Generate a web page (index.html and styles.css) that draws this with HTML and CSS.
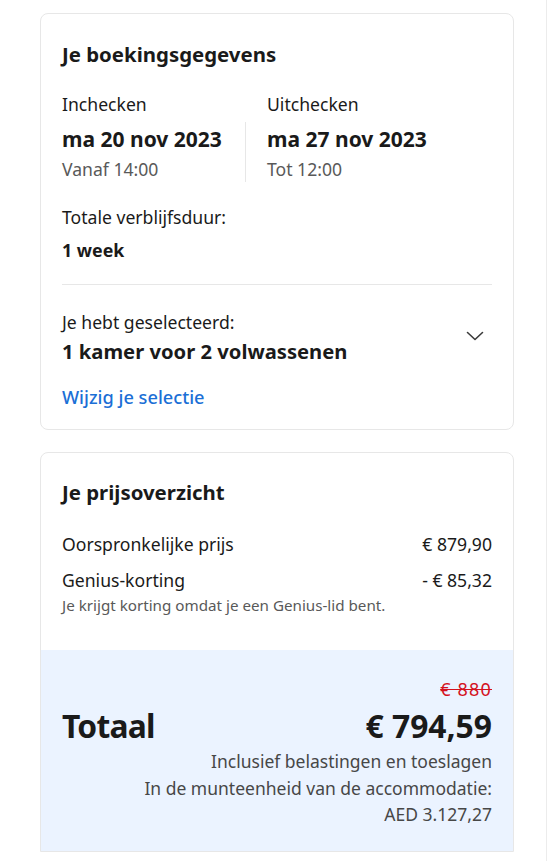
FILE: index.html
```html
<!DOCTYPE html>
<html lang="nl">
<head>
<meta charset="utf-8">
<link rel="stylesheet" href="styles.css">
</head>
<body>
<div class="page">
  <main class="col">
    <section class="card">
      <h2 class="title">Je boekingsgegevens</h2>
      <div class="dates">
        <div class="date">
          <div class="label">Inchecken</div>
          <div class="big">ma 20 nov 2023</div>
          <div class="sub">Vanaf 14:00</div>
        </div>
        <div class="vsep"></div>
        <div class="date">
          <div class="label">Uitchecken</div>
          <div class="big">ma 27 nov 2023</div>
          <div class="sub">Tot 12:00</div>
        </div>
      </div>
      <div class="stay">
        <div class="label">Totale verblijfsduur:</div>
        <div class="strong">1 week</div>
      </div>
      <hr class="hsep">
      <div class="selected">
        <div>
          <div class="label">Je hebt geselecteerd:</div>
          <div class="sel-value">1 kamer voor 2 volwassenen</div>
        </div>
        <svg class="chev" width="18" height="10" viewBox="0 0 18 10"><path d="M1.5 1.5 L9 8.5 L16.5 1.5" fill="none" stroke="#3b3b3b" stroke-width="1.6" stroke-linecap="round" stroke-linejoin="round"/></svg>
      </div>
      <a class="link">Wijzig je selectie</a>
    </section>

    <section class="card card-price">
      <div class="price-top">
        <h2 class="title">Je prijsoverzicht</h2>
        <div class="row"><span>Oorspronkelijke prijs</span><span>€ 879,90</span></div>
        <div class="row row2"><span>Genius-korting</span><span>- € 85,32</span></div>
        <div class="note">Je krijgt korting omdat je een Genius-lid bent.</div>
      </div>
      <div class="total">
        <div class="old">€ 880</div>
        <div class="total-row"><span class="total-label">Totaal</span><span>€ 794,59</span></div>
        <div class="incl">Inclusief belastingen en toeslagen</div>
        <div class="incl">In de munteenheid van de accommodatie:</div>
        <div class="incl">AED 3.127,27</div>
      </div>
    </section>
  </main>
  <aside class="side"></aside>
</div>
</body>
</html>
```
FILE: styles.css
```css
* { box-sizing: border-box; }
html, body { margin: 0; padding: 0; background: #fff; }
body {
  font-family: "Noto Sans", "Open Sans", Arial, sans-serif;
  color: #1a1a1a;
  font-size: 17.6px;
  overflow: hidden;
  height: 861px;
}
.page {
  display: flex;
  padding-left: 40px;
  padding-top: 13px;
}
.col {
  flex: 0 0 474px;
  width: 474px;
  display: flex;
  flex-direction: column;
  gap: 22px;
}
.side {
  flex: 0 0 4px;
  margin-left: 32px;
  height: 861px;
  margin-top: -13px;
  border-left: 1px solid #ececec;
}
.card {
  border: 1px solid #e7e7e7;
  border-radius: 8px;
  padding: 26px 21px 19px;
}
.title {
  margin: 0;
  font-size: 20.4px;
  font-weight: 700;
  line-height: 28px;
}
.dates {
  display: flex;
  margin-top: 24px;
}
.date { display: flex; flex-direction: column; }
.date:first-child { width: 183px; }
.date:last-child { padding-left: 21px; }
.vsep {
  width: 1px;
  background: #e7e7e7;
  margin-top: 30px;
}
.label { line-height: 24px; }
.big { font-size: 21px; font-weight: 700; line-height: 30px; margin-top: 8px; }
.sub { line-height: 26px; color: #595959; margin-top: 2px; }
.stay { margin-top: 22px; }
.stay .label { line-height: 26px; }
.strong { font-weight: 700; font-size: 17.8px; line-height: 26px; margin-top: 7px; }
.hsep { border: 0; border-top: 1px solid #e7e7e7; margin: 21px 0 0; }
.selected {
  display: flex;
  align-items: center;
  justify-content: space-between;
  margin-top: 24px;
  padding-right: 8px;
}
.selected .label { line-height: 26px; }
.sel-value { font-size: 20.2px; font-weight: 700; line-height: 32px; }
.chev { margin-bottom: 4px; }
.link {
  display: block;
  margin-top: 17px;
  color: #1b6fd6;
  font-size: 18.2px;
  font-weight: 500;
  line-height: 26px;
}
.card-price { padding: 0; overflow: hidden; border-bottom-left-radius: 0; border-bottom-right-radius: 0; }
.price-top { padding: 25px 21px 35px; }
.row {
  display: flex;
  justify-content: space-between;
  line-height: 26px;
  margin-top: 25px;
}
.row2 { margin-top: 10px; }
.note { font-size: 15.2px; color: #595959; line-height: 20px; margin-top: 2px; }
.total {
  background: #ebf3ff;
  padding: 26px 21px 23px;
  text-align: right;
}
.old {
  color: #d4111e;
  text-decoration: line-through;
  font-size: 18px;
  letter-spacing: 1.2px;
  line-height: 26px;
}
.total-row {
  display: flex;
  justify-content: space-between;
  align-items: baseline;
  font-size: 31.8px;
  font-weight: 700;
  line-height: 44px;
  margin-top: 2px;
}
.total-label { letter-spacing: -0.8px; }
.incl { color: #474747; font-size: 17.5px; line-height: 26.5px; }
.incl:first-of-type { margin-top: 1px; }
```
